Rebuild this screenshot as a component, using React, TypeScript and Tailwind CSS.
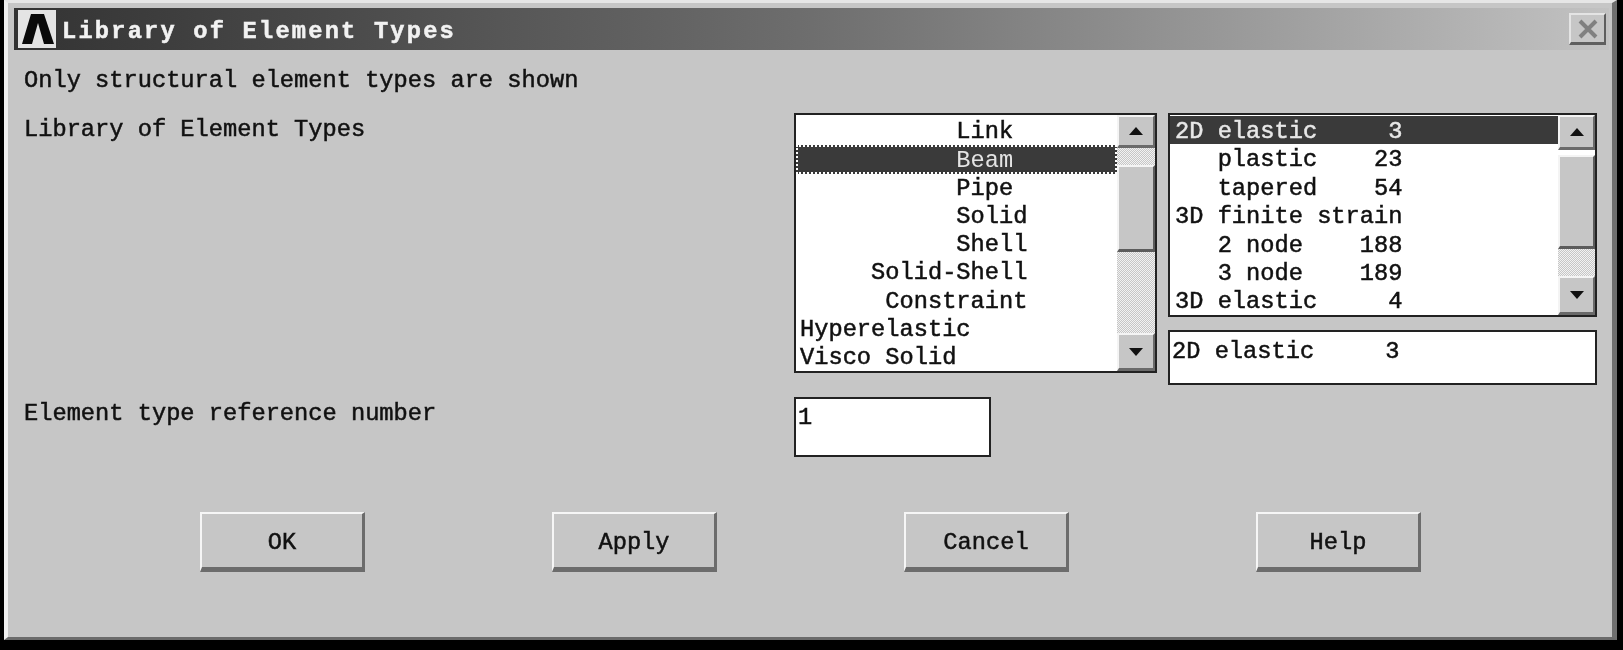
const typeItems = [
  '           Link',
  '           Beam',
  '           Pipe',
  '           Solid',
  '           Shell',
  '     Solid-Shell',
  '      Constraint',
  'Hyperelastic',
  'Visco Solid',
];

const elementItems = [
  '2D elastic     3',
  '   plastic    23',
  '   tapered    54',
  '3D finite strain',
  '   2 node    188',
  '   3 node    189',
  '3D elastic     4',
];

function Arrow({ down }: { down?: boolean }) {
  return (
    <svg width="16" height="10" viewBox="0 0 16 10">
      <path d={down ? 'M1 1H15L8 9Z' : 'M1 9H15L8 1Z'} fill="#111" />
    </svg>
  );
}

function ScrollButton({ down, className }: { down?: boolean; className: string }) {
  return (
    <div
      className={`flex shrink-0 items-center justify-center border-t-2 border-l-2 border-t-[#f4f4f4] border-l-[#f4f4f4] border-r-2 border-b-[3px] border-r-[#6a6a6a] border-b-[#6a6a6a] bg-[#c6c6c6] ${className}`}
    >
      <Arrow down={down} />
    </div>
  );
}

function Track({ className }: { className: string }) {
  return (
    <div
      className={`shrink-0 bg-[repeating-conic-gradient(#f2f2f2_0_25%,#c6c6c6_0_50%)] bg-[length:2px_2px] ${className}`}
    />
  );
}

function Thumb({ className }: { className: string }) {
  return (
    <div
      className={`shrink-0 border-t-2 border-l-2 border-t-[#f4f4f4] border-l-[#f4f4f4] border-r-2 border-b-[3px] border-r-[#5c5c5c] border-b-[#5c5c5c] bg-[#c6c6c6] ${className}`}
    />
  );
}

function ActionButton({ label }: { label: string }) {
  return (
    <button className="h-[60px] w-[165px] border-t-2 border-l-2 border-t-[#f6f6f6] border-l-[#f6f6f6] border-r-[3px] border-b-[5px] border-r-[#6c6c6c] border-b-[#6c6c6c] bg-[#c6c6c6] pt-1 text-[#111]">
      {label}
    </button>
  );
}

export default function App() {
  return (
    <div className="h-[650px] w-[1623px] overflow-hidden bg-black pl-1 pr-1.5 font-['Liberation_Mono',monospace] text-[23.7px] leading-[28px] text-[#111] blur-[0.5px] [-webkit-text-stroke:0.5px]">
      <div className="h-[640px] border-t-[3px] border-l-4 border-r-[5px] border-b-[3px] border-t-[#e6e6e6] border-l-[#f0f0f0] border-r-[#707070] border-b-[#6b6b6b] bg-[#c6c6c6]">
        {/* title bar */}
        <div className="ml-[6px] mr-[3px] mt-[5px] flex h-[42px] items-center bg-gradient-to-r from-[#333333] via-[#6e6e6e] to-[#c2c2c2] pl-[4px] pr-[3px]">
          <svg width="38" height="38" viewBox="0 0 38 38" className="shrink-0">
            <rect width="38" height="38" fill="#e4e4e4" />
            <path d="M4 34L13 4H26L36 34H26L20 13L14 34Z" fill="#0a0a0a" />
          </svg>
          <span className="ml-[6px] mt-[6px] whitespace-pre font-bold tracking-[2.2px] text-[#f2f2f2]">Library of Element Types</span>
          <div className="ml-auto flex h-[32px] w-[37px] items-center justify-center border-t-2 border-l-2 border-t-[#e4e4e4] border-l-[#e4e4e4] border-r-2 border-b-[3px] border-r-[#5e5e5e] border-b-[#5e5e5e] bg-[#c6c6c6]">
            <svg width="22" height="20" viewBox="0 0 22 20">
              <path d="M3 2L19 18M19 2L3 18" stroke="#808080" strokeWidth="4" />
            </svg>
          </div>
        </div>

        <div className="ml-4 mt-[17px] h-[46px]">Only structural element types are shown</div>

        <div className="flex h-[272px]">
          <div className="w-[786px] pl-4 pt-[3px]">Library of Element Types</div>

          {/* element family list */}
          <div className="flex h-[260px] w-[363px] border-2 border-[#222] bg-white">
            <div className="w-[321px] whitespace-pre pt-[1px]">
              {typeItems.map((item) => (
                <div
                  key={item}
                  className={
                    item.includes('Beam')
                      ? 'mb-[-1px] mt-px h-[28.3px] border-2 border-dotted border-white bg-[#3a3a3a] pl-[2px] leading-[28px] text-[#e4e4e4] [-webkit-text-stroke:0px]'
                      : 'h-[28.3px] pl-1 leading-[32px]'
                  }
                >
                  {item}
                </div>
              ))}
            </div>
            <div className="flex w-[38px] flex-col">
              <ScrollButton className="h-[33px]" />
              <Track className="h-[17px]" />
              <Thumb className="h-[87px]" />
              <Track className="h-[81px]" />
              <ScrollButton down className="h-[38px]" />
            </div>
          </div>

          <div className="ml-[11px] flex w-[429px] flex-col">
            {/* element type list */}
            <div className="flex h-[204px] border-2 border-[#222] bg-white">
              <div className="w-[388px] overflow-hidden whitespace-pre pt-[1px]">
                {elementItems.map((item, i) => (
                  <div
                    key={item}
                    className={
                      i === 0
                        ? 'h-[28.4px] bg-[#3a3a3a] pl-[5px] leading-[32px] text-[#e8e8e8]'
                        : 'h-[28.4px] pl-[5px] leading-[32px]'
                    }
                  >
                    {item}
                  </div>
                ))}
              </div>
              <div className="flex w-[37px] flex-col">
                <ScrollButton className="h-[35px]" />
                <Thumb className="mt-[5px] h-[94px]" />
                <Track className="h-[27px]" />
                <ScrollButton down className="h-[39px]" />
              </div>
            </div>
            <div className="mt-[13px] h-[55px] whitespace-pre border-2 border-[#222] bg-white pl-[2px] pt-[6px]">2D elastic     3</div>
          </div>
        </div>

        <div className="mt-[12px] flex h-[60px]">
          <div className="w-[786px] pl-4 pt-[3px]">Element type reference number</div>
          <div className="h-[60px] w-[197px] border-2 border-[#222] bg-white pl-[2px] pt-[5px]">1</div>
        </div>

        <div className="ml-[192px] mt-[55px] flex gap-[187px]">
          <ActionButton label="OK" />
          <ActionButton label="Apply" />
          <ActionButton label="Cancel" />
          <ActionButton label="Help" />
        </div>
      </div>
    </div>
  );
}
